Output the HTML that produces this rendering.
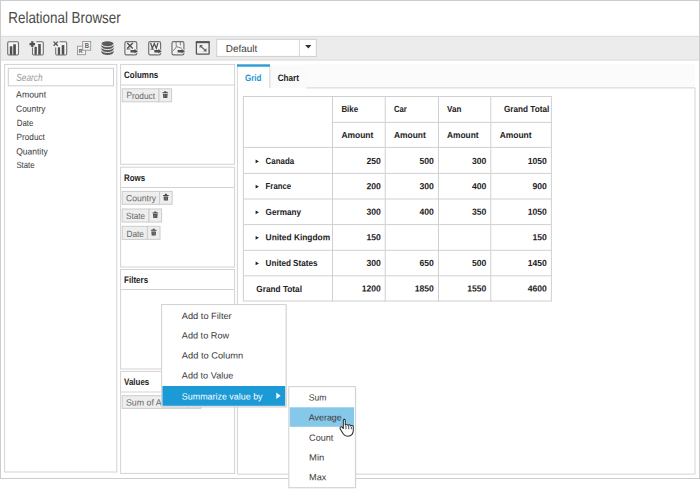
<!DOCTYPE html>
<html>
<head>
<meta charset="utf-8">
<title>Relational Browser</title>
<style>
html,body{margin:0;padding:0;background:#fff;}
body{width:700px;height:489px;overflow:hidden;}
svg{display:block;}
svg text{font-family:"Liberation Sans",sans-serif;white-space:pre;text-rendering:geometricPrecision;}
</style>
</head>
<body>
<svg width="700" height="489" viewBox="0 0 700 489">
<rect x="0" y="0" width="700" height="489" fill="#ffffff"/>
<rect x="0.5" y="0.5" width="699" height="478.0" fill="#fff" stroke="#cdcdcd" stroke-width="1"/>
<rect x="1" y="36" width="698" height="24.3" fill="#ececec"/>
<line x1="1" y1="36.3" x2="699" y2="36.3" stroke="#dcdcdc" stroke-width="1"/>
<line x1="1" y1="60.0" x2="699" y2="60.0" stroke="#dcdcdc" stroke-width="1"/>
<text x="8.30" y="22.70" font-size="16.0" fill="#4a4a4a" textLength="112.40" lengthAdjust="spacingAndGlyphs" transform="rotate(0.03 8.30 22.70)">Relational Browser</text>
<rect x="7.7" y="41.7" width="10.8" height="13.3" fill="#f5f5f5" stroke="#6e6e6e" stroke-width="1.1" rx="1.2"/>
<rect x="9.8" y="46.3" width="2.5" height="8.6" fill="#505050"/>
<rect x="13.2" y="44.3" width="2.7" height="10.6" fill="#505050"/>
<path d="M36.2 41.7h5.900a1.2 1.2 0 0 1 1.2 1.2v10.900a1.2 1.2 0 0 1-1.2 1.2h-8.400a1.2 1.2 0 0 1-1.2-1.2v-6.200" fill="#f5f5f5" stroke="#6e6e6e" stroke-width="1.1"/>
<rect x="34.5" y="46.8" width="2.3" height="7.9" fill="#505050"/>
<rect x="38.2" y="44.0" width="2.6" height="10.7" fill="#505050"/>
<path d="M29.5 43.0h5.600v2.300h-5.600zM31.15 41.35h2.300v5.600h-2.300z" fill="#505050"/>
<path d="M59.6 41.7h5.900a1.2 1.2 0 0 1 1.2 1.2v10.900a1.2 1.2 0 0 1-1.2 1.2h-8.600a1.2 1.2 0 0 1-1.2-1.2v-6.400" fill="#f5f5f5" stroke="#6e6e6e" stroke-width="1.1"/>
<rect x="57.8" y="47.3" width="2.3" height="7.4" fill="#505050"/>
<rect x="61.7" y="45.1" width="2.6" height="9.6" fill="#505050"/>
<path d="M53.6 41.6l4.2 4.2M57.8 41.6l-4.2 4.2" fill="none" stroke="#505050" stroke-width="1.3"/>
<rect x="77.5" y="46.2" width="8.0" height="8.5" fill="#f2f2f2" stroke="#959595" stroke-width="0.9"/>
<rect x="82.7" y="41.5" width="8.0" height="8.7" fill="#f2f2f2" stroke="#959595" stroke-width="0.9"/>
<text x="84.8" y="48.4" font-size="7.2" font-weight="bold" fill="#606060" textLength="4.3" lengthAdjust="spacingAndGlyphs">B</text>
<text x="78.8" y="53.3" font-size="5.8" font-weight="bold" fill="#606060" textLength="3.8" lengthAdjust="spacingAndGlyphs">R</text>
<path d="M101.5 44.0v8.300a6 2.700 0 0 0 12 0v-8.300z" fill="#5a5a5a"/>
<ellipse cx="107.5" cy="44.0" rx="6" ry="2.700" fill="#5a5a5a"/>
<path d="M101.5 44.0a6 2.700 0 0 0 12 0" fill="none" stroke="#f6f6f6" stroke-width="0.95"/>
<path d="M101.5 46.9a6 2.700 0 0 0 12 0" fill="none" stroke="#f6f6f6" stroke-width="0.95"/>
<path d="M101.5 49.8a6 2.700 0 0 0 12 0" fill="none" stroke="#f6f6f6" stroke-width="0.95"/>
<rect x="124.9" y="41.6" width="11.9" height="13.2" fill="#f1f1f1" stroke="#6e6e6e" stroke-width="1.15" rx="1.6"/>
<path d="M130.5 49.9h4.0v-1.0l3.5 2.3-3.5 2.3v-1.0h-4.0z" fill="#505050" stroke="#f1f1f1" stroke-width="1.4" paint-order="stroke"/>
<path d="M127.2 43.0l5.6 5.4M132.8 43.0l-5.6 5.4" fill="none" stroke="#505050" stroke-width="1.45"/>
<line x1="126.7" y1="49.0" x2="130.3" y2="49.0" stroke="#505050" stroke-width="0.9"/>
<rect x="148.7" y="41.6" width="11.9" height="13.2" fill="#f1f1f1" stroke="#6e6e6e" stroke-width="1.15" rx="1.6"/>
<path d="M154.29999999999998 49.9h4.0v-1.0l3.5 2.3-3.5 2.3v-1.0h-4.0z" fill="#505050" stroke="#f1f1f1" stroke-width="1.4" paint-order="stroke"/>
<path d="M150.6 42.9l1.7 5.4 2.0-4.8 2.0 4.8 1.7-5.4" fill="none" stroke="#505050" stroke-width="1.25"/>
<line x1="150.5" y1="49.2" x2="154.1" y2="49.2" stroke="#505050" stroke-width="0.9"/>
<rect x="172.0" y="41.6" width="11.9" height="13.2" fill="#f1f1f1" stroke="#6e6e6e" stroke-width="1.15" rx="1.6"/>
<path d="M177.6 49.9h4.0v-1.0l3.5 2.3-3.5 2.3v-1.0h-4.0z" fill="#505050" stroke="#f1f1f1" stroke-width="1.4" paint-order="stroke"/>
<path d="M176.0 41.8c0.2 1.8 0.2 3.2 0.3 4.800c-0.6 1.8-1.900 3.200-3.600 4.400M176.3 46.6c1.600 0.500 3.400 1.100 5.600 1.700M180.4 41.800v3.600" fill="none" stroke="#777" stroke-width="0.9"/>
<rect x="196.4" y="42.0" width="12.7" height="12.2" fill="#f1f1f1" stroke="#555" stroke-width="1.3" rx="0.5"/>
<rect x="195.8" y="41.3" width="13.9" height="1.9" fill="#555"/>
<path d="M199.6 45.1h3.300l-3.300 3.100zM206.5 51.4h-3.300l3.300-3.100z" fill="#5e5e5e"/>
<path d="M201.0 46.5l4.100 3.600" fill="none" stroke="#5e5e5e" stroke-width="1.2"/>
<rect x="216.7" y="39.3" width="99.6" height="17.1" fill="#fff" stroke="#cfcfcf" stroke-width="1"/>
<line x1="299.4" y1="39.8" x2="299.4" y2="56" stroke="#d6d6d6" stroke-width="1"/>
<text x="225.80" y="51.90" font-size="10.2" fill="#3a3a3a" textLength="31.40" lengthAdjust="spacingAndGlyphs" transform="rotate(0.03 225.80 51.90)">Default</text>
<path d="M305.2 45.1h6.2l-3.1 3.4z" fill="#2e2e2e"/>
<rect x="4.6" y="64.4" width="112.2" height="407.6" fill="#fff" stroke="#d3d3d3" stroke-width="1"/>
<rect x="8.3" y="68.3" width="105.2" height="17.5" fill="#fff" stroke="#cdcdcd" stroke-width="1"/>
<text x="16.30" y="81.30" font-size="10.3" fill="#999999" font-style="italic" textLength="26.20" lengthAdjust="spacingAndGlyphs" transform="rotate(0.03 16.30 81.30)">Search</text>
<text x="16.10" y="97.60" font-size="9.0" fill="#3a3a3a" textLength="30.05" lengthAdjust="spacingAndGlyphs" transform="rotate(0.03 16.10 97.60)">Amount</text>
<text x="16.10" y="111.75" font-size="9.0" fill="#3a3a3a" textLength="29.40" lengthAdjust="spacingAndGlyphs" transform="rotate(0.03 16.10 111.75)">Country</text>
<text x="16.80" y="126.30" font-size="9.0" fill="#3a3a3a" textLength="16.60" lengthAdjust="spacingAndGlyphs" transform="rotate(0.03 16.80 126.30)">Date</text>
<text x="16.60" y="140.30" font-size="9.0" fill="#3a3a3a" textLength="28.30" lengthAdjust="spacingAndGlyphs" transform="rotate(0.03 16.60 140.30)">Product</text>
<text x="16.15" y="154.40" font-size="9.0" fill="#3a3a3a" textLength="31.65" lengthAdjust="spacingAndGlyphs" transform="rotate(0.03 16.15 154.40)">Quantity</text>
<text x="16.40" y="168.40" font-size="9.0" fill="#3a3a3a" textLength="18.20" lengthAdjust="spacingAndGlyphs" transform="rotate(0.03 16.40 168.40)">State</text>
<rect x="120.6" y="64.4" width="114.0" height="99.9" fill="#fff" stroke="#d3d3d3" stroke-width="1"/>
<line x1="120.6" y1="85.0" x2="234.6" y2="85.0" stroke="#d3d3d3" stroke-width="1"/>
<text x="124.10" y="78.20" font-size="9.4" fill="#222" font-weight="bold" textLength="34.20" lengthAdjust="spacingAndGlyphs" transform="rotate(0.03 124.10 78.20)">Columns</text>
<rect x="120.6" y="167.2" width="114.0" height="99.80000000000001" fill="#fff" stroke="#d3d3d3" stroke-width="1"/>
<line x1="120.6" y1="187.5" x2="234.6" y2="187.5" stroke="#d3d3d3" stroke-width="1"/>
<text x="124.10" y="180.50" font-size="9.4" fill="#222" font-weight="bold" textLength="21.00" lengthAdjust="spacingAndGlyphs" transform="rotate(0.03 124.10 180.50)">Rows</text>
<rect x="120.6" y="269.5" width="114.0" height="99.5" fill="#fff" stroke="#d3d3d3" stroke-width="1"/>
<line x1="120.6" y1="289.5" x2="234.6" y2="289.5" stroke="#d3d3d3" stroke-width="1"/>
<text x="124.10" y="283.00" font-size="9.4" fill="#222" font-weight="bold" textLength="24.00" lengthAdjust="spacingAndGlyphs" transform="rotate(0.03 124.10 283.00)">Filters</text>
<rect x="120.6" y="371.4" width="114.0" height="102.0" fill="#fff" stroke="#d3d3d3" stroke-width="1"/>
<line x1="120.6" y1="392.0" x2="234.6" y2="392.0" stroke="#d3d3d3" stroke-width="1"/>
<text x="124.10" y="385.30" font-size="9.4" fill="#222" font-weight="bold" textLength="25.10" lengthAdjust="spacingAndGlyphs" transform="rotate(0.03 124.10 385.30)">Values</text>
<rect x="122.2" y="88.8" width="36.8" height="13.0" fill="#eeeeee" stroke="#cccccc" stroke-width="1"/>
<text x="126.40" y="98.50" font-size="9.0" fill="#666666" textLength="28.70" lengthAdjust="spacingAndGlyphs" transform="rotate(0.03 126.40 98.50)">Product</text>
<rect x="159.0" y="88.8" width="12.6" height="13.0" fill="#eeeeee" stroke="#cccccc" stroke-width="1"/>
<path d="M162.5 92.3h5.600v1.050h-5.600zM164.3 91.2h2v1.100h-2zM163.0 93.9h4.600l-0.300 4.000h-4.000z" fill="#484848"/>
<path d="M164.5 94.4v3.000M166.1 94.4v3.000" stroke="#a0a0a0" stroke-width="0.5" fill="none"/>
<rect x="122.2" y="191.4" width="37.39999999999999" height="12.900000000000006" fill="#eeeeee" stroke="#cccccc" stroke-width="1"/>
<text x="126.10" y="201.30" font-size="9.0" fill="#666666" textLength="30.00" lengthAdjust="spacingAndGlyphs" transform="rotate(0.03 126.10 201.30)">Country</text>
<rect x="159.6" y="191.4" width="12.6" height="12.900000000000006" fill="#eeeeee" stroke="#cccccc" stroke-width="1"/>
<path d="M163.1 194.9h5.600v1.050h-5.600zM164.9 193.8h2v1.100h-2zM163.6 196.5h4.600l-0.300 4.000h-4.000z" fill="#484848"/>
<path d="M165.1 197.0v3.000M166.7 197.0v3.000" stroke="#a0a0a0" stroke-width="0.5" fill="none"/>
<rect x="122.2" y="209.0" width="26.799999999999997" height="13.0" fill="#eeeeee" stroke="#cccccc" stroke-width="1"/>
<text x="126.10" y="219.00" font-size="9.0" fill="#666666" textLength="19.00" lengthAdjust="spacingAndGlyphs" transform="rotate(0.03 126.10 219.00)">State</text>
<rect x="149.0" y="209.0" width="12.6" height="13.0" fill="#eeeeee" stroke="#cccccc" stroke-width="1"/>
<path d="M152.5 212.5h5.600v1.050h-5.600zM154.3 211.4h2v1.100h-2zM153.0 214.1h4.600l-0.300 4.000h-4.000z" fill="#484848"/>
<path d="M154.5 214.6v3.000M156.1 214.6v3.000" stroke="#a0a0a0" stroke-width="0.5" fill="none"/>
<rect x="122.2" y="226.3" width="25.200000000000003" height="13.099999999999994" fill="#eeeeee" stroke="#cccccc" stroke-width="1"/>
<text x="126.40" y="236.50" font-size="9.0" fill="#666666" textLength="17.60" lengthAdjust="spacingAndGlyphs" transform="rotate(0.03 126.40 236.50)">Date</text>
<rect x="147.4" y="226.3" width="12.6" height="13.099999999999994" fill="#eeeeee" stroke="#cccccc" stroke-width="1"/>
<path d="M150.9 229.8h5.600v1.050h-5.600zM152.70000000000002 228.70000000000002h2v1.100h-2zM151.4 231.4h4.600l-0.300 4.000h-4.000z" fill="#484848"/>
<path d="M152.9 231.9v3.000M154.5 231.9v3.000" stroke="#a0a0a0" stroke-width="0.5" fill="none"/>
<rect x="122.2" y="395.7" width="78.6" height="12.7" fill="#eeeeee" stroke="#cccccc" stroke-width="1"/>
<line x1="188.3" y1="395.7" x2="188.3" y2="408.4" stroke="#cccccc" stroke-width="1"/>
<text x="125.9" y="405.6" font-size="9.0" fill="#666666" textLength="60.3" lengthAdjust="spacingAndGlyphs" transform="rotate(0.03 125.9 405.6)">Sum of Amount</text>
<rect x="237.4" y="64.4" width="457.4" height="23.6" fill="#fbfbfb"/>
<rect x="237.4" y="87.9" width="457.6" height="386.2" fill="#fff"/>
<path d="M237.4 64.4V474.1H695V87.9H306.6" fill="none" stroke="#d3d3d3" stroke-width="1"/>
<rect x="237.9" y="64.4" width="31.6" height="24.2" fill="#fff"/>
<rect x="270.3" y="66.0" width="36.3" height="22.4" fill="#fafafa"/>
<line x1="269.8" y1="66" x2="269.8" y2="88.2" stroke="#d8d8d8" stroke-width="1"/>
<rect x="237.0" y="64.3" width="33.0" height="2.4" fill="#2a9cd6"/>
<text x="245.00" y="80.60" font-size="9.2" fill="#2396d6" font-weight="bold" textLength="16.50" lengthAdjust="spacingAndGlyphs" transform="rotate(0.03 245.00 80.60)">Grid</text>
<text x="277.70" y="80.60" font-size="9.4" fill="#222" font-weight="bold" textLength="21.30" lengthAdjust="spacingAndGlyphs" transform="rotate(0.03 277.70 80.60)">Chart</text>
<line x1="243.4" y1="96.5" x2="551.4" y2="96.5" stroke="#d0d0d0" stroke-width="1"/>
<line x1="332.5" y1="122.4" x2="551.4" y2="122.4" stroke="#d0d0d0" stroke-width="1"/>
<line x1="243.4" y1="147.4" x2="551.4" y2="147.4" stroke="#d0d0d0" stroke-width="1"/>
<line x1="243.4" y1="173.4" x2="551.4" y2="173.4" stroke="#d0d0d0" stroke-width="1"/>
<line x1="243.4" y1="199.0" x2="551.4" y2="199.0" stroke="#d0d0d0" stroke-width="1"/>
<line x1="243.4" y1="224.6" x2="551.4" y2="224.6" stroke="#d0d0d0" stroke-width="1"/>
<line x1="243.4" y1="250.3" x2="551.4" y2="250.3" stroke="#d0d0d0" stroke-width="1"/>
<line x1="243.4" y1="275.8" x2="551.4" y2="275.8" stroke="#d0d0d0" stroke-width="1"/>
<line x1="243.4" y1="301.0" x2="551.4" y2="301.0" stroke="#d0d0d0" stroke-width="1"/>
<line x1="243.4" y1="96.0" x2="243.4" y2="301.5" stroke="#d0d0d0" stroke-width="1"/>
<line x1="332.5" y1="96.0" x2="332.5" y2="301.5" stroke="#d0d0d0" stroke-width="1"/>
<line x1="385.2" y1="96.0" x2="385.2" y2="301.5" stroke="#d0d0d0" stroke-width="1"/>
<line x1="438.5" y1="96.0" x2="438.5" y2="301.5" stroke="#d0d0d0" stroke-width="1"/>
<line x1="490.8" y1="96.0" x2="490.8" y2="301.5" stroke="#d0d0d0" stroke-width="1"/>
<line x1="551.4" y1="96.0" x2="551.4" y2="301.5" stroke="#d0d0d0" stroke-width="1"/>
<text x="341.40" y="112.40" font-size="8.9" fill="#222" font-weight="bold" textLength="16.70" lengthAdjust="spacingAndGlyphs" transform="rotate(0.03 341.40 112.40)">Bike</text>
<text x="393.90" y="112.40" font-size="8.9" fill="#222" font-weight="bold" textLength="12.90" lengthAdjust="spacingAndGlyphs" transform="rotate(0.03 393.90 112.40)">Car</text>
<text x="447.00" y="112.40" font-size="8.9" fill="#222" font-weight="bold" textLength="14.30" lengthAdjust="spacingAndGlyphs" transform="rotate(0.03 447.00 112.40)">Van</text>
<text x="504.00" y="112.40" font-size="8.9" fill="#222" font-weight="bold" textLength="45.30" lengthAdjust="spacingAndGlyphs" transform="rotate(0.03 504.00 112.40)">Grand Total</text>
<text x="341.40" y="137.90" font-size="8.9" fill="#222" font-weight="bold" textLength="31.90" lengthAdjust="spacingAndGlyphs" transform="rotate(0.03 341.40 137.90)">Amount</text>
<text x="393.90" y="137.90" font-size="8.9" fill="#222" font-weight="bold" textLength="31.90" lengthAdjust="spacingAndGlyphs" transform="rotate(0.03 393.90 137.90)">Amount</text>
<text x="447.00" y="137.90" font-size="8.9" fill="#222" font-weight="bold" textLength="31.60" lengthAdjust="spacingAndGlyphs" transform="rotate(0.03 447.00 137.90)">Amount</text>
<text x="499.70" y="137.90" font-size="8.9" fill="#222" font-weight="bold" textLength="31.90" lengthAdjust="spacingAndGlyphs" transform="rotate(0.03 499.70 137.90)">Amount</text>
<text x="265.60" y="163.90" font-size="8.9" fill="#222" font-weight="bold" textLength="28.50" lengthAdjust="spacingAndGlyphs" transform="rotate(0.03 265.60 163.90)">Canada</text>
<path d="M255.6 159.50l3.3 1.9-3.3 1.9z" fill="#222"/>
<text x="265.60" y="189.20" font-size="8.9" fill="#222" font-weight="bold" textLength="25.60" lengthAdjust="spacingAndGlyphs" transform="rotate(0.03 265.60 189.20)">France</text>
<path d="M255.6 184.80l3.3 1.9-3.3 1.9z" fill="#222"/>
<text x="265.60" y="214.80" font-size="8.9" fill="#222" font-weight="bold" textLength="35.40" lengthAdjust="spacingAndGlyphs" transform="rotate(0.03 265.60 214.80)">Germany</text>
<path d="M255.6 210.40l3.3 1.9-3.3 1.9z" fill="#222"/>
<text x="265.60" y="240.30" font-size="8.9" fill="#222" font-weight="bold" textLength="64.50" lengthAdjust="spacingAndGlyphs" transform="rotate(0.03 265.60 240.30)">United Kingdom</text>
<path d="M255.6 235.90l3.3 1.9-3.3 1.9z" fill="#222"/>
<text x="265.60" y="265.90" font-size="8.9" fill="#222" font-weight="bold" textLength="51.90" lengthAdjust="spacingAndGlyphs" transform="rotate(0.03 265.60 265.90)">United States</text>
<path d="M255.6 261.50l3.3 1.9-3.3 1.9z" fill="#222"/>
<text x="256.30" y="291.60" font-size="8.9" fill="#222" font-weight="bold" textLength="45.70" lengthAdjust="spacingAndGlyphs" transform="rotate(0.03 256.30 291.60)">Grand Total</text>
<text x="366.54" y="163.90" font-size="8.9" fill="#222" font-weight="bold" textLength="14.36" lengthAdjust="spacingAndGlyphs" transform="rotate(0.03 366.54 163.90)">250</text>
<text x="419.54" y="163.90" font-size="8.9" fill="#222" font-weight="bold" textLength="14.36" lengthAdjust="spacingAndGlyphs" transform="rotate(0.03 419.54 163.90)">500</text>
<text x="472.04" y="163.90" font-size="8.9" fill="#222" font-weight="bold" textLength="14.36" lengthAdjust="spacingAndGlyphs" transform="rotate(0.03 472.04 163.90)">300</text>
<text x="527.72" y="163.90" font-size="8.9" fill="#222" font-weight="bold" textLength="19.08" lengthAdjust="spacingAndGlyphs" transform="rotate(0.03 527.72 163.90)">1050</text>
<text x="366.54" y="189.20" font-size="8.9" fill="#222" font-weight="bold" textLength="14.36" lengthAdjust="spacingAndGlyphs" transform="rotate(0.03 366.54 189.20)">200</text>
<text x="419.54" y="189.20" font-size="8.9" fill="#222" font-weight="bold" textLength="14.36" lengthAdjust="spacingAndGlyphs" transform="rotate(0.03 419.54 189.20)">300</text>
<text x="472.04" y="189.20" font-size="8.9" fill="#222" font-weight="bold" textLength="14.36" lengthAdjust="spacingAndGlyphs" transform="rotate(0.03 472.04 189.20)">400</text>
<text x="532.44" y="189.20" font-size="8.9" fill="#222" font-weight="bold" textLength="14.36" lengthAdjust="spacingAndGlyphs" transform="rotate(0.03 532.44 189.20)">900</text>
<text x="366.54" y="214.80" font-size="8.9" fill="#222" font-weight="bold" textLength="14.36" lengthAdjust="spacingAndGlyphs" transform="rotate(0.03 366.54 214.80)">300</text>
<text x="419.54" y="214.80" font-size="8.9" fill="#222" font-weight="bold" textLength="14.36" lengthAdjust="spacingAndGlyphs" transform="rotate(0.03 419.54 214.80)">400</text>
<text x="472.04" y="214.80" font-size="8.9" fill="#222" font-weight="bold" textLength="14.36" lengthAdjust="spacingAndGlyphs" transform="rotate(0.03 472.04 214.80)">350</text>
<text x="527.72" y="214.80" font-size="8.9" fill="#222" font-weight="bold" textLength="19.08" lengthAdjust="spacingAndGlyphs" transform="rotate(0.03 527.72 214.80)">1050</text>
<text x="366.54" y="240.30" font-size="8.9" fill="#222" font-weight="bold" textLength="14.36" lengthAdjust="spacingAndGlyphs" transform="rotate(0.03 366.54 240.30)">150</text>
<text x="532.44" y="240.30" font-size="8.9" fill="#222" font-weight="bold" textLength="14.36" lengthAdjust="spacingAndGlyphs" transform="rotate(0.03 532.44 240.30)">150</text>
<text x="366.54" y="265.90" font-size="8.9" fill="#222" font-weight="bold" textLength="14.36" lengthAdjust="spacingAndGlyphs" transform="rotate(0.03 366.54 265.90)">300</text>
<text x="419.54" y="265.90" font-size="8.9" fill="#222" font-weight="bold" textLength="14.36" lengthAdjust="spacingAndGlyphs" transform="rotate(0.03 419.54 265.90)">650</text>
<text x="472.04" y="265.90" font-size="8.9" fill="#222" font-weight="bold" textLength="14.36" lengthAdjust="spacingAndGlyphs" transform="rotate(0.03 472.04 265.90)">500</text>
<text x="527.72" y="265.90" font-size="8.9" fill="#222" font-weight="bold" textLength="19.08" lengthAdjust="spacingAndGlyphs" transform="rotate(0.03 527.72 265.90)">1450</text>
<text x="361.82" y="291.60" font-size="8.9" fill="#222" font-weight="bold" textLength="19.08" lengthAdjust="spacingAndGlyphs" transform="rotate(0.03 361.82 291.60)">1200</text>
<text x="414.82" y="291.60" font-size="8.9" fill="#222" font-weight="bold" textLength="19.08" lengthAdjust="spacingAndGlyphs" transform="rotate(0.03 414.82 291.60)">1850</text>
<text x="467.32" y="291.60" font-size="8.9" fill="#222" font-weight="bold" textLength="19.08" lengthAdjust="spacingAndGlyphs" transform="rotate(0.03 467.32 291.60)">1550</text>
<text x="527.72" y="291.60" font-size="8.9" fill="#222" font-weight="bold" textLength="19.08" lengthAdjust="spacingAndGlyphs" transform="rotate(0.03 527.72 291.60)">4600</text>
<rect x="162.2" y="305.4" width="125" height="102.6" fill="#000" opacity="0.05"/>
<rect x="161.6" y="304.6" width="124.5" height="102.2" fill="#fff" stroke="#d0d0d0" stroke-width="1"/>
<text x="181.80" y="319.10" font-size="9.0" fill="#3a3a3a" textLength="49.90" lengthAdjust="spacingAndGlyphs" transform="rotate(0.03 181.80 319.10)">Add to Filter</text>
<text x="181.80" y="338.40" font-size="9.0" fill="#3a3a3a" textLength="47.30" lengthAdjust="spacingAndGlyphs" transform="rotate(0.03 181.80 338.40)">Add to Row</text>
<text x="181.80" y="358.50" font-size="9.0" fill="#3a3a3a" textLength="61.40" lengthAdjust="spacingAndGlyphs" transform="rotate(0.03 181.80 358.50)">Add to Column</text>
<text x="181.80" y="378.60" font-size="9.0" fill="#3a3a3a" textLength="51.60" lengthAdjust="spacingAndGlyphs" transform="rotate(0.03 181.80 378.60)">Add to Value</text>
<rect x="162.4" y="386.0" width="122.8" height="19.8" fill="#1b9ad6"/>
<text x="181.80" y="399.40" font-size="9.0" fill="#fff" textLength="80.80" lengthAdjust="spacingAndGlyphs" transform="rotate(0.03 181.80 399.40)">Summarize value by</text>
<path d="M276.3 392.4l4.3 3.300-4.3 3.300z" fill="#fff"/>
<rect x="289.6" y="387.4" width="67" height="101" fill="#000" opacity="0.05"/>
<rect x="288.8" y="386.6" width="66.6" height="101.1" fill="#fff" stroke="#d0d0d0" stroke-width="1"/>
<rect x="289.7" y="407.3" width="64.4" height="19.5" fill="#86c8e9"/>
<text x="308.80" y="400.50" font-size="9.0" fill="#3a3a3a" textLength="17.70" lengthAdjust="spacingAndGlyphs" transform="rotate(0.03 308.80 400.50)">Sum</text>
<text x="308.80" y="420.60" font-size="9.0" fill="#3a3a3a" textLength="32.90" lengthAdjust="spacingAndGlyphs" transform="rotate(0.03 308.80 420.60)">Average</text>
<text x="309.10" y="440.70" font-size="9.0" fill="#3a3a3a" textLength="24.20" lengthAdjust="spacingAndGlyphs" transform="rotate(0.03 309.10 440.70)">Count</text>
<text x="309.10" y="460.40" font-size="9.0" fill="#3a3a3a" textLength="15.30" lengthAdjust="spacingAndGlyphs" transform="rotate(0.03 309.10 460.40)">Min</text>
<text x="309.10" y="480.30" font-size="9.0" fill="#3a3a3a" textLength="17.20" lengthAdjust="spacingAndGlyphs" transform="rotate(0.03 309.10 480.30)">Max</text>
<g transform="translate(339.2,418.3) scale(0.88,0.83)">
<path d="M6.2 1.2c-.9 0-1.5.7-1.5 1.600v9.600l-.9-1.200c-.7-.9-1.700-1.200-2.400-.7-.7.500-.8 1.500-.2 2.500l3.300 5.600c1.100 1.900 2.600 3 5.200 3 2.300 0 3.900-.8 4.900-2.200.9-1.300 1.400-2.900 1.400-5.100v-3.900c0-1.100-.6-1.800-1.500-1.800-.6 0-1.100.3-1.400.8-.1-1-.7-1.600-1.600-1.600-.7 0-1.200.4-1.500 1-.1-.9-.7-1.500-1.600-1.500-.7 0-1.200.300-1.500.9V2.800c0-.9-.7-1.600-1.600-1.600z" fill="#fff" stroke="#2a2a2a" stroke-width="1.15" stroke-linejoin="round"/>
<path d="M7.700 8.800v4.400M10.800 9.300v3.900M13.800 10.400v2.800" stroke="#2a2a2a" stroke-width="1" fill="none"/>
</g>
</svg>
</body>
</html>
